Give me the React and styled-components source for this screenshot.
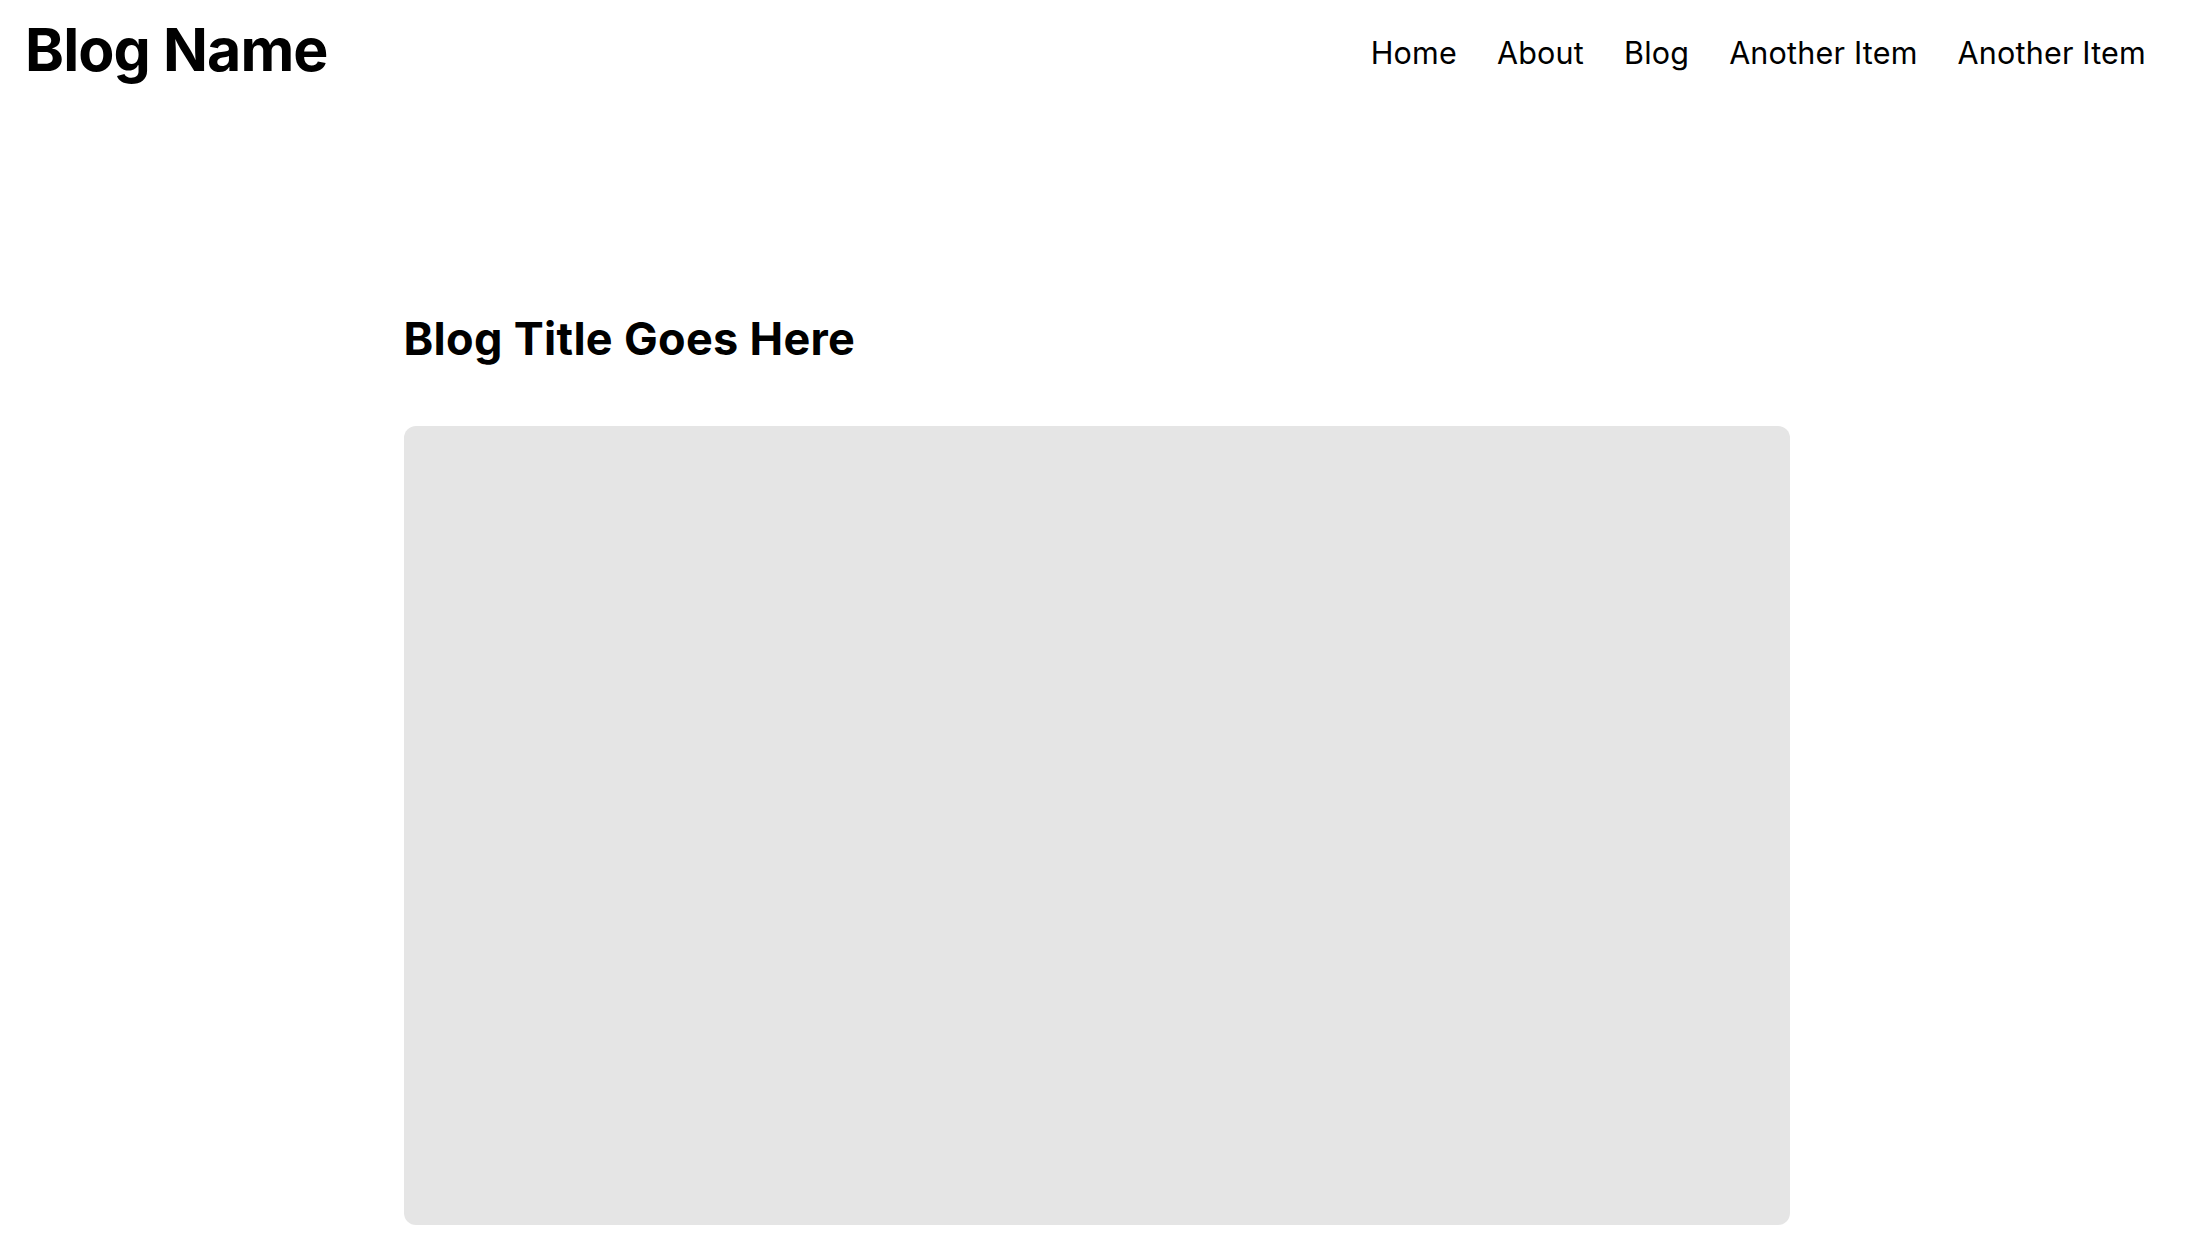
import styled, { createGlobalStyle } from 'styled-components';

const GlobalStyle = createGlobalStyle`
  * { box-sizing: border-box; }
  body {
    margin: 0;
    background: #fff;
    color: #000;
    font-family: Inter, "Liberation Sans", sans-serif;
  }
`;

const Header = styled.header`
  display: flex;
  align-items: center;
  justify-content: space-between;
  padding: 14px 24px 0 25px;
`;

const Brand = styled.h1`
  margin: 0;
  font-size: 59px;
  font-weight: 700;
  letter-spacing: -0.9px;
  line-height: 1.21;
`;

const Nav = styled.nav`
  display: flex;
  align-items: center;
  margin-top: 8px;
`;

const NavLink = styled.a`
  padding: 0 20px;
  font-size: 30.5px;
  font-weight: 400;
  letter-spacing: 0.2px;
  color: #000;
  text-decoration: none;
  line-height: 1.21;
`;

const Main = styled.main`
  max-width: 1389px;
  margin: 0 auto;
  padding: 227px 0 0 3px;
`;

const Title = styled.h2`
  margin: 0 0 59px 0;
  font-size: 45px;
  font-weight: 700;
  letter-spacing: 0.3px;
  line-height: 1.21;
`;

const ImagePlaceholder = styled.div`
  width: 100%;
  height: 799px;
  background: #e5e5e5;
  border-radius: 12px;
`;

const navItems = ['Home', 'About', 'Blog', 'Another Item', 'Another Item'];

export default function App() {
  return (
    <>
      <GlobalStyle />
      <Header>
        <Brand>Blog Name</Brand>
        <Nav>
          {navItems.map((item, idx) => (
            <NavLink key={idx} href="#">{item}</NavLink>
          ))}
        </Nav>
      </Header>
      <Main>
        <Title>Blog Title Goes Here</Title>
        <ImagePlaceholder />
      </Main>
    </>
  );
}
